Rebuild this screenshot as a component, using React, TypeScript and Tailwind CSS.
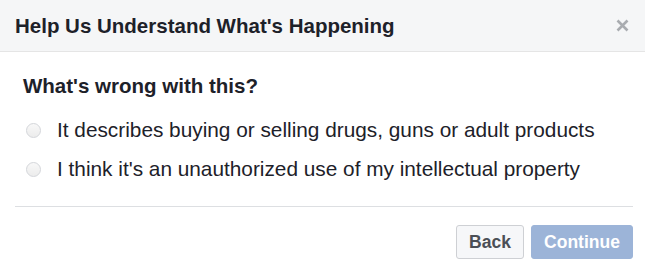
export default function App() {
  return (
    <div className="h-[275px] w-[645px] overflow-hidden bg-white font-['Liberation_Sans',Arial,sans-serif] text-[#1d2129]">
      <div className="flex h-[52px] items-center justify-between border-b border-[#e5e5e5] bg-[#f5f6f7] pl-[15px] pr-[16px]">
        <h2 className="text-[20.5px] font-bold leading-[24px]">Help Us Understand What's Happening</h2>
        <button type="button" className="text-[#a9acb0]">
          <svg width="13" height="13" viewBox="0 0 13 13" fill="none" stroke="currentColor" strokeWidth="2.6">
            <path d="M1.5 1.5l10 10M11.5 1.5l-10 10" />
          </svg>
        </button>
      </div>
      <div className="pl-[15px] pr-[12px]">
        <p className="pl-[8px] pt-[22px] text-[20.5px] font-bold leading-[24px]">What's wrong with this?</p>
        <div className="mt-[20px] flex flex-col gap-[15px] pl-[11px]">
          {[
            'It describes buying or selling drugs, guns or adult products',
            "I think it's an unauthorized use of my intellectual property",
          ].map((label) => (
            <label key={label} className="flex h-[24px] items-center gap-[16px] text-[20.8px] leading-[24px] text-[#1d2129]">
              <span className="h-[15px] w-[15px] shrink-0 rounded-full border border-[#d4d6da] bg-gradient-to-b from-[#f8f8f8] to-[#ececec]" />
              <span>{label}</span>
            </label>
          ))}
        </div>
        <div className="mt-[25px] border-t border-[#dddfe2]" />
        <div className="mt-[18px] flex justify-end gap-[7px]">
          <button
            type="button"
            className="h-[34px] w-[68px] rounded-[3px] border border-[#ced0d4] bg-[#f6f7f9] text-[17.5px] font-bold text-[#4b4f56]"
          >
            Back
          </button>
          <button
            type="button"
            className="h-[34px] w-[102px] rounded-[3px] border border-[#9cb4d8] bg-[#9cb4d8] text-[17.5px] font-bold text-white"
          >
            Continue
          </button>
        </div>
      </div>
    </div>
  )
}
